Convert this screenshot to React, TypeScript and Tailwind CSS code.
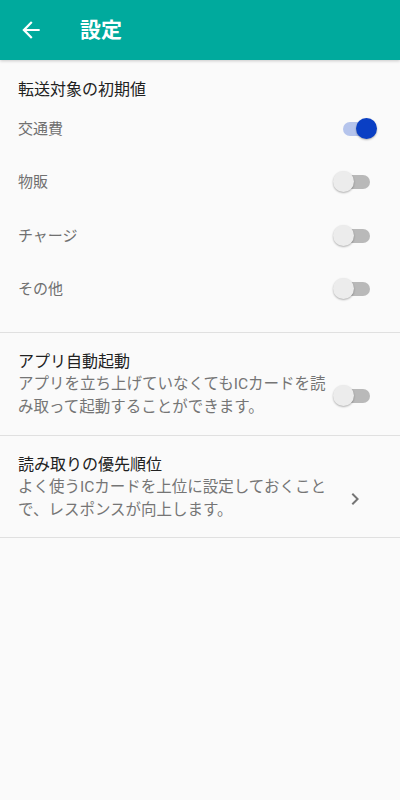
import { useState } from "react";

const FONT = { fontFamily: 'Roboto, "Noto Sans CJK JP", sans-serif' };

const Toggle = ({ on, onClick }: { on: boolean; onClick: () => void }) => (
  <button onClick={onClick} className="relative w-[44px] h-[22px] shrink-0">
    <span
      className={`absolute left-[10px] top-[4px] w-[27px] h-[14px] rounded-full ${
        on ? "bg-[#b5c4ec]" : "bg-[#b9b9b9]"
      }`}
    />
    <span
      className={`absolute top-0 w-[21px] h-[21px] rounded-full shadow-[0_1px_2px_rgba(0,0,0,0.3)] ${
        on ? "right-0 bg-[#0a3fc4]" : "left-0 bg-[#ececec]"
      }`}
    />
  </button>
);

const App = () => {
  const [targets, setTargets] = useState([
    { label: "交通費", on: true },
    { label: "物販", on: false },
    { label: "チャージ", on: false },
    { label: "その他", on: false },
  ]);
  const [autoStart, setAutoStart] = useState(false);

  const flip = (i: number) =>
    setTargets((t) => t.map((x, j) => (j === i ? { ...x, on: !x.on } : x)));

  return (
    <div className="w-[400px] h-[800px] bg-[#fafafa] flex flex-col" style={FONT}>
      <header className="h-[60px] shrink-0 bg-[#00aa9d] flex items-center shadow-[0_1px_3px_rgba(0,0,0,0.2)] relative z-10">
        <svg viewBox="0 0 24 24" className="w-[26px] h-[26px] ml-[18px] fill-white">
          <path d="M20 11H7.83l5.59-5.59L12 4l-8 8 8 8 1.41-1.41L7.83 13H20v-2z" />
        </svg>
        <h1 className="ml-[36px] text-[21px] font-bold text-white leading-none">設定</h1>
      </header>

      {/* 転送対象 */}
      <section className="pt-[18px] pb-[16px] pl-[18px] pr-[23px] border-b border-[#e0e0e0]">
        <h2 className="text-[16px] leading-[24px] text-[#212121]">転送対象の初期値</h2>
        {targets.map((t, i) => (
          <div key={t.label} className="h-[53.5px] flex items-center justify-between">
            <span className="text-[15px] text-[#707070]">{t.label}</span>
            <Toggle on={t.on} onClick={() => flip(i)} />
          </div>
        ))}
      </section>

      {/* 自動起動 */}
      <section className="pt-[18px] pb-[16px] pl-[18px] pr-[23px] border-b border-[#e0e0e0]">
        <h2 className="text-[16px] leading-[22px] text-[#212121]">アプリ自動起動</h2>
        <div className="flex items-center justify-between">
          <p className="text-[15.5px] leading-[23px] text-[#757575] whitespace-nowrap">
            アプリを立ち上げていなくてもICカードを読
            <br />
            み取って起動することができます。
          </p>
          <Toggle on={autoStart} onClick={() => setAutoStart(!autoStart)} />
        </div>
      </section>

      {/* 優先順位 */}
      <section className="pt-[18px] pb-[15px] pl-[18px] pr-[23px] border-b border-[#e0e0e0]">
        <h2 className="text-[16px] leading-[22px] text-[#212121]">読み取りの優先順位</h2>
        <div className="flex items-center justify-between">
          <p className="text-[15.5px] leading-[23px] text-[#757575] whitespace-nowrap">
            よく使うICカードを上位に設定しておくこと
            <br />
            で、レスポンスが向上します。
          </p>
          <svg viewBox="0 0 24 24" className="w-[24px] h-[24px] mr-[10px] fill-[#757575]">
            <path d="M10 6L8.59 7.41 13.17 12l-4.58 4.59L10 18l6-6z" />
          </svg>
        </div>
      </section>
    </div>
  );
};

export default App;
